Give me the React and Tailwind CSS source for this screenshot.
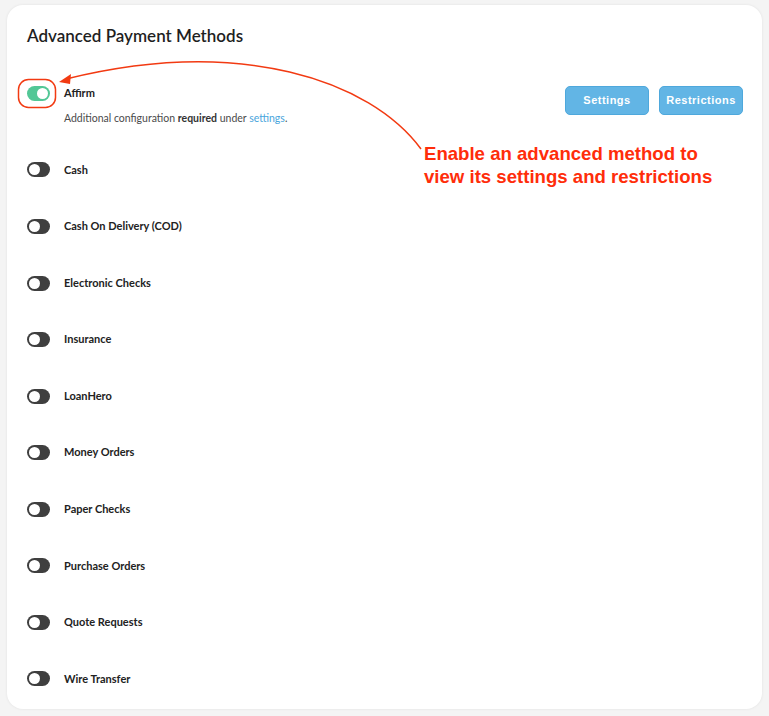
import React from "react";

const methods = [
  "Cash",
  "Cash On Delivery (COD)",
  "Electronic Checks",
  "Insurance",
  "LoanHero",
  "Money Orders",
  "Paper Checks",
  "Purchase Orders",
  "Quote Requests",
  "Wire Transfer",
];

const Toggle = ({ on }) => (
  <div
    className={`w-[23px] h-[15px] rounded-full flex items-center px-[2px] shrink-0 ${
      on ? "bg-[#52c796] justify-end" : "bg-[#3f3f3f] justify-start"
    }`}
  >
    <div
      className={`w-[11px] h-[11px] rounded-full bg-white ${
        on ? "" : "ring-1 ring-[#3f3f3f]"
      }`}
    />
  </div>
);

const ActionButton = ({ children }) => (
  <button className="w-[84px] h-[29px] rounded-[5px] bg-[#62b5e5] border border-[#4ea8dc] text-white text-[11px] font-bold tracking-[0.5px] font-['Liberation_Sans',Arial,sans-serif]">
    {children}
  </button>
);

export default function App() {
  return (
    <div className="min-h-[716px] bg-[#f4f4f4] pt-[5px] px-[7px] pb-[7px] font-['Lato','Noto_Sans',sans-serif] relative">
      <div className="bg-white rounded-[16px] shadow-[0_0_3px_rgba(0,0,0,0.08)] pl-[20px] pr-[19px] pt-[17px] pb-[2px]">
        <h1 className="text-[17px] leading-[28px] font-semibold text-[#1f1f1f]">
          Advanced Payment Methods
        </h1>

        {/* enabled method */}
        <div className="h-[91.7px] pt-[35px] flex justify-between items-start">
          <div className="flex flex-col">
            <div className="flex items-center gap-[14px] h-[16px]">
              <Toggle on />
              <span className="text-[11px] font-bold text-[#222]">Affirm</span>
            </div>
            <p className="text-[10.5px] leading-[14px] mt-[10px] ml-[37px] text-[#4a4a4a]">
              Additional configuration <span className="font-bold text-[#333]">required</span> under{" "}
              <span className="text-[#4aa5dc]">settings</span>.
            </p>
          </div>
          <div className="flex gap-[10px] mt-px">
            <ActionButton>Settings</ActionButton>
            <ActionButton>Restrictions</ActionButton>
          </div>
        </div>

        <div className="flex flex-col">
          {methods.map((m) => (
            <div key={m} className="h-[56.55px] flex items-center gap-[14px]">
              <Toggle />
              <span className="text-[11px] font-bold text-[#222]">{m}</span>
            </div>
          ))}
        </div>
      </div>

      {/* callout */}
      <svg className="absolute left-0 top-0 pointer-events-none" width="769" height="716">
        <rect x="18.5" y="79.5" width="37" height="28" rx="10" fill="none" stroke="#f23a12" strokeWidth="1.5" />
        <path d="M421 149 C 370 80, 240 36, 66 79" fill="none" stroke="#f23a12" strokeWidth="1.5" />
        <path d="M59 82 L71 74 L70 84 Z" fill="#f23a12" />
      </svg>
      <div className="absolute left-[424px] top-[142px] text-[18.6px] leading-[23px] font-bold text-[#ff2d0a] font-['Liberation_Sans',Arial,sans-serif]">
        <p>Enable an advanced method to</p>
        <p>view its settings and restrictions</p>
      </div>
    </div>
  );
}
